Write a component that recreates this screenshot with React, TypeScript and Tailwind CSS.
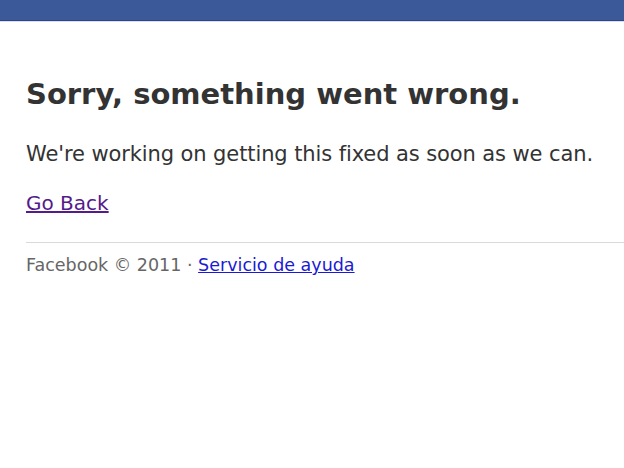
export default function App() {
  return (
    <div className="min-h-[468px] bg-white font-['DejaVu_Sans',Verdana,sans-serif]">
      {/* top bar */}
      <div className="h-[20px] bg-[#3b5998]" />
      <div className="h-[1px] bg-[#2d4486]" />
      <div className="h-[1px] bg-[#d8dfea]" />

      <div className="pl-[26px] pt-[55px]">
        <h1 className="text-[29px] leading-[34px] font-bold text-[#333]">Sorry, something went wrong.</h1>
        <p className="mt-[31px] text-[21px] leading-[24px] text-[#333] tracking-[-0.1px]">
          We're working on getting this fixed as soon as we can.
        </p>
        <p className="mt-[25px] text-[20px] leading-[24px]">
          <a href="#" className="text-[#551a8b] underline">Go Back</a>
        </p>
        <div className="mt-[27px] h-[1px] bg-[#d9d9d9]" />
        <div className="mt-[11px] text-[17.5px] leading-[22px] text-[#666]">
          Facebook © 2011 ·{' '}
          <a href="#" className="text-[#1a1ad6] underline">Servicio de ayuda</a>
        </div>
      </div>
    </div>
  )
}
